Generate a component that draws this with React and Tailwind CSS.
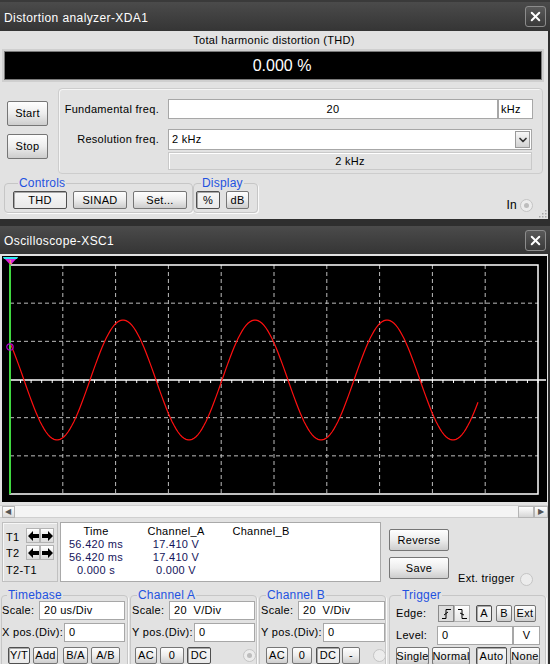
import React from "react";
import { X, ChevronDown } from "lucide-react";

const FONT = { fontFamily: '"Liberation Sans", Arial, sans-serif' };

// ── small building blocks ────────────────────────────────────────────────────
function Btn({ children, pressed, className = "" }) {
  return (
    <div
      className={`flex shrink-0 items-center justify-center whitespace-nowrap rounded-[2px] border leading-none text-black ${
        pressed
          ? "border-[#4f4f4f] bg-linear-to-b from-[#f7f7f7] to-[#e9e9e9] shadow-[inset_1px_1px_0_#a8a8a8]"
          : "border-[#767676] bg-linear-to-b from-[#fefefe] via-[#ededed] to-[#cdcdcd]"
      } ${className}`}
    >
      {children}
    </div>
  );
}

function Field({ children, className = "" }) {
  return (
    <div className={`flex shrink-0 items-center whitespace-nowrap border border-[#a7a7a7] bg-white text-black ${className}`}>
      {children}
    </div>
  );
}

function Group({ label, className = "", children }) {
  return (
    <fieldset className={`min-w-0 shrink-0 rounded-[4px] border border-[#c6c6c6] shadow-[1px_1px_0_#fafafa] ${className}`}>
      <legend className="ml-[5px] px-[1px] text-[12px] leading-[12px] tracking-[0.2px] text-[#1f52e0]">{label}</legend>
      {children}
    </fieldset>
  );
}

function Radio({ dot }) {
  return (
    <div className="flex h-[13px] w-[13px] shrink-0 items-center justify-center rounded-full border border-[#c4c4c4] bg-[#ececec]">
      {dot && <div className="h-[5px] w-[5px] rounded-full bg-[#bdbdbd]" />}
    </div>
  );
}

function Arrow({ dir }) {
  return (
    <svg width="11" height="10" viewBox="0 0 11 10">
      {dir === "left" ? (
        <path d="M0 5 L5 0 V3 H11 V7 H5 V10 Z" fill="#000" />
      ) : (
        <path d="M11 5 L6 0 V3 H0 V7 H6 V10 Z" fill="#000" />
      )}
    </svg>
  );
}

function TitleBar({ title, h }) {
  return (
    <div className={`flex shrink-0 items-center justify-between bg-linear-to-b from-[#4b4b4b] to-[#353535] pl-[4px] pr-[4px] ${h}`}>
      <span className="pt-[2px] text-[12px] tracking-[0.4px] text-white">{title}</span>
      <div className="flex h-[21px] w-[21px] items-center justify-center rounded-[3px] border border-[#8c8c8c] bg-linear-to-b from-[#5a5a5a] to-[#3a3a3a]">
        <X size={15} strokeWidth={3.2} color="#fff" />
      </div>
    </div>
  );
}

// ── oscilloscope drawing ─────────────────────────────────────────────────────
const wavePts = [];
for (let x = 10; x <= 478; x += 2) {
  const y = 380 - 60 * Math.sin((2 * Math.PI * (x + 42)) / 132);
  wavePts.push(`${x - 2},${(y - 256).toFixed(1)}`);
}

function Scope() {
  const L = 8, R = 536, T = 9, B = 238, C = 124;
  const vx = Array.from({ length: 9 }, (_, i) => L + 52.8 * (i + 1));
  const hy = [1, 2, 4, 5].map((j) => T + 38.17 * j);
  const ticks = Array.from({ length: 50 }, (_, i) => L + 10.56 * (i + 1));
  return (
    <svg width="545" height="246" className="block">
      <rect width="545" height="246" fill="#000" />
      {vx.map((x) => (
        <line key={x} x1={x} x2={x} y1={T} y2={B} stroke="#bdbdbd" strokeDasharray="4 3" />
      ))}
      {hy.map((y) => (
        <line key={y} x1={L} x2={R} y1={y} y2={y} stroke="#bdbdbd" strokeDasharray="4 3" />
      ))}
      <line x1={L} x2={R + 8} y1={C} y2={C} stroke="#fff" strokeWidth="1.5" />
      {ticks.map((x) => (
        <line key={x} x1={x} x2={x} y1={C} y2={C + 3} stroke="#fff" />
      ))}
      <rect x={L} y={T} width={R - L} height={B - T} fill="none" stroke="#fff" strokeWidth="1.5" />
      <polyline points={wavePts.join(" ")} fill="none" stroke="#ff1010" strokeWidth="1.2" />
      <line x1={L} x2={L} y1={2} y2={B} stroke="#16e016" strokeWidth="1.5" />
      <polygon points="1,1 16,1 8.5,9" fill="#e020e0" />
      <polygon points="1,1 16,1 15,3 2,3" fill="#30e8f0" />
      <text x="8.5" y="7.5" fontSize="6" fill="#ffd000" textAnchor="middle">1</text>
      <circle cx={L} cy={91} r="3.2" fill="none" stroke="#b000d0" strokeWidth="1.2" />
    </svg>
  );
}

// ── main ─────────────────────────────────────────────────────────────────────
export default function App() {
  return (
    <div
      className="flex h-[664px] w-[550px] flex-col overflow-hidden bg-[#2e2e2e] text-[11px] tracking-[0.3px]"
      style={FONT}
    >
      <div className="h-[2px] shrink-0 bg-[#3a3a3a]" />
      <TitleBar title="Distortion analyzer-XDA1" h="h-[29px]" />

      {/* ── Distortion analyzer body ── */}
      <div className="mr-[2px] flex h-[188px] shrink-0 flex-col bg-[#e2e2e2]">
        <div className="flex h-[18px] items-center justify-center text-black">
          Total harmonic distortion (THD)
        </div>
        <div className="ml-[2px] flex h-[33px] w-[542px] items-center justify-center border-2 border-[#cfcfcf] bg-black pl-[18px] text-[16px] tracking-normal text-white shadow-[inset_0_0_0_1px_#7a7a7a]">
          0.000 %
        </div>

        <div className="mt-[6px] flex">
          <div className="flex w-[58px] flex-col gap-[8px] pl-[7px] pt-[13px]">
            <Btn className="h-[25px] w-[41px]">Start</Btn>
            <Btn className="h-[25px] w-[41px]">Stop</Btn>
          </div>
          <div className="flex h-[86px] w-[485px] flex-col rounded-[4px] border border-[#cdcdcd] shadow-[inset_1px_1px_0_#f5f5f5]">
            <div className="mt-[10px] flex items-center">
              <div className="w-[100px] whitespace-nowrap text-right text-black">Fundamental freq.</div>
              <Field className="ml-[9px] h-[20px] w-[330px] justify-center">20</Field>
              <Field className="h-[20px] w-[35px] pl-[2px]">kHz</Field>
            </div>
            <div className="mt-[10px] flex items-center">
              <div className="w-[100px] whitespace-nowrap text-right text-black">Resolution freq.</div>
              <Field className="ml-[9px] h-[21px] w-[364px] justify-between pl-[3px]">
                <span>2 kHz</span>
                <div className="mr-[1px] flex h-[17px] w-[15px] items-center justify-center border border-[#9a9a9a] bg-linear-to-b from-[#f8f8f8] to-[#d2d2d2]">
                  <ChevronDown size={12} strokeWidth={3.5} color="#333" />
                </div>
              </Field>
            </div>
            <div className="ml-[109px] mt-[2px] flex h-[18px] w-[364px] items-center justify-center border border-[#c9c9c9] bg-[#e2e2e2] text-black shadow-[inset_1px_1px_0_#fff]">
              2 kHz
            </div>
          </div>
        </div>

        <div className="mt-[3px] flex items-end">
          <Group label="Controls" className="ml-[4px] flex h-[36px] w-[189px] gap-[6px] pl-[8px] pt-[2px]">
            <Btn pressed className="h-[18px] w-[54px]">THD</Btn>
            <Btn className="h-[18px] w-[54px]">SINAD</Btn>
            <Btn className="h-[18px] w-[54px]">Set...</Btn>
          </Group>
          <Group label="Display" className="flex h-[36px] w-[65px] gap-[6px] pl-[2px] pt-[2px]">
            <Btn pressed className="h-[18px] w-[24px]">%</Btn>
            <Btn className="h-[18px] w-[23px]">dB</Btn>
          </Group>
          <div className="mb-[-1px] ml-auto flex items-center gap-[3px] text-[12px] text-black">
            In <Radio dot />
          </div>
          <svg width="10" height="10" viewBox="0 0 10 10" className="mb-[-5px] ml-[4px] mr-[1px]">
            {[[8, 2], [8, 5], [5, 5], [8, 8], [5, 8], [2, 8]].map(([cx, cy]) => (
              <rect key={`${cx}-${cy}`} x={cx} y={cy} width="1.5" height="1.5" fill="#a8a8a8" />
            ))}
          </svg>
        </div>
      </div>

      <div className="h-[7px] shrink-0" />
      <TitleBar title="Oscilloscope-XSC1" h="h-[28px]" />

      {/* ── Oscilloscope body ── */}
      <div className="mr-[2px] flex min-h-0 flex-1 flex-col bg-[#e2e2e2]">
        <div className="ml-[2px] mt-[2px] shrink-0">
          <Scope />
        </div>

        {/* scrollbar */}
        <div className="mt-[3px] flex h-[13px] shrink-0 items-center border-y border-[#cfcfcf] bg-[#f4f4f4] pl-[2px]">
          <div className="flex h-[12px] w-[13px] items-center justify-center border border-[#b5b5b5] bg-linear-to-b from-white to-[#dcdcdc] text-[8px] text-[#555]">
            ◀
          </div>
          <div className="flex-1" />
          <div className="h-[12px] w-[16px] border border-[#b5b5b5] bg-linear-to-b from-white to-[#d6d6d6]" />
          <div className="flex h-[12px] w-[14px] items-center justify-center border border-[#b5b5b5] bg-linear-to-b from-white to-[#dcdcdc] text-[8px] text-[#555]">
            ▶
          </div>
        </div>

        {/* cursor readouts */}
        <div className="mt-[4px] flex shrink-0">
          <div className="ml-[2px] flex h-[60px] w-[56px] flex-col border border-[#c0c0c0] pl-[3px] text-black shadow-[inset_1px_1px_0_#f6f6f6]">
            <div className="mt-[5px] flex">
              <div className="flex flex-col justify-center gap-[3px] pt-[2px]">
                <span className="leading-[13px]">T1</span>
                <span className="leading-[13px]">T2</span>
              </div>
              <div className="ml-[7px] grid grid-cols-2 gap-y-[2px]">
                {["left", "right", "left", "right"].map((d, i) => (
                  <div key={i} className="flex h-[15px] w-[14px] items-center justify-center border border-[#b3b3b3] bg-linear-to-b from-white to-[#dadada]">
                    <Arrow dir={d} />
                  </div>
                ))}
              </div>
            </div>
            <div className="mt-[4px] leading-[13px]">T2-T1</div>
          </div>

          <div className="ml-[2px] grid h-[60px] w-[321px] grid-cols-[70px_90px_80px] content-start border border-[#a9a9a9] bg-white pt-[2px] text-center leading-[13px] text-[#14145a]">
            <span className="text-black">Time</span>
            <span className="text-black">Channel_A</span>
            <span className="text-black">Channel_B</span>
            <span>56.420 ms</span>
            <span>17.410 V</span>
            <span />
            <span>56.420 ms</span>
            <span>17.410 V</span>
            <span />
            <span>0.000 s</span>
            <span>0.000 V</span>
            <span />
          </div>

          <div className="ml-[8px] mt-[7px] flex flex-col gap-[6px]">
            <Btn className="h-[22px] w-[60px]">Reverse</Btn>
            <Btn className="h-[22px] w-[60px]">Save</Btn>
          </div>
          <div className="mb-[-4px] ml-[9px] flex items-end gap-[5px] self-end whitespace-nowrap text-black">
            Ext. trigger <Radio />
          </div>
        </div>

        {/* control groups */}
        <div className="mt-[7px] flex shrink-0 whitespace-nowrap text-black">
          <Group label="Timebase" className="ml-[1px] h-[80px] w-[127px]">
            <div className="flex items-center">
              <span className="w-[37px]">Scale:</span>
              <Field className="h-[19px] w-[86px] pl-[4px]">20 us/Div</Field>
            </div>
            <div className="mt-[3px] flex items-center">
              <span className="w-[62px]">X pos.(Div):</span>
              <Field className="h-[19px] w-[61px] pl-[4px]">0</Field>
            </div>
            <div className="mt-[5px] flex gap-[3px] pl-[6px]">
              <Btn pressed className="h-[17px] w-[22px]">Y/T</Btn>
              <Btn className="h-[17px] w-[25px]">Add</Btn>
              <Btn className="ml-[2px] h-[17px] w-[25px]">B/A</Btn>
              <Btn className="h-[17px] w-[29px]">A/B</Btn>
            </div>
          </Group>

          <Group label="Channel A" className="ml-[2px] h-[80px] w-[127px] pl-[1px]">
            <div className="flex items-center">
              <span className="w-[37px]">Scale:</span>
              <Field className="h-[19px] w-[86px] pl-[4px]">20&nbsp;&nbsp;V/Div</Field>
            </div>
            <div className="mt-[3px] flex items-center">
              <span className="w-[62px]">Y pos.(Div):</span>
              <Field className="h-[19px] w-[61px] pl-[4px]">0</Field>
            </div>
            <div className="mt-[5px] flex items-center gap-[3px] pl-[3px]">
              <Btn className="h-[17px] w-[22px]">AC</Btn>
              <Btn className="h-[17px] w-[24px]">0</Btn>
              <Btn pressed className="h-[17px] w-[24px]">DC</Btn>
              <div className="ml-[29px]">
                <Radio dot />
              </div>
            </div>
          </Group>

          <Group label="Channel B" className="ml-[2px] h-[80px] w-[127px] pl-[1px]">
            <div className="flex items-center">
              <span className="w-[37px]">Scale:</span>
              <Field className="h-[19px] w-[87px] pl-[4px]">20&nbsp;&nbsp;V/Div</Field>
            </div>
            <div className="mt-[3px] flex items-center">
              <span className="w-[62px]">Y pos.(Div):</span>
              <Field className="h-[19px] w-[62px] pl-[4px]">0</Field>
            </div>
            <div className="mt-[5px] flex items-center pl-[5px]">
              <Btn className="h-[17px] w-[22px]">AC</Btn>
              <Btn className="ml-[4px] h-[17px] w-[20px]">0</Btn>
              <Btn pressed className="ml-[4px] h-[17px] w-[24px]">DC</Btn>
              <Btn className="ml-[2px] h-[17px] w-[18px]">-</Btn>
              <div className="ml-[13px]">
                <Radio />
              </div>
            </div>
          </Group>

          <Group label="Trigger" className="ml-[3px] h-[80px] w-[157px] pl-[6px]">
            <div className="mt-[4px] flex items-center">
              <span className="w-[42px]">Edge:</span>
              <div className="flex h-[17px] w-[16px] items-center justify-center border border-[#8a8a8a] bg-[#dcdcdc]">
                <svg width="11" height="11" viewBox="0 0 11 11">
                  <path d="M1 10.5 H5 V1.5 H10" fill="none" stroke="#000" />
                  <path d="M3 7 L7 4" fill="none" stroke="#000" />
                </svg>
              </div>
              <div className="flex h-[17px] w-[16px] items-center justify-center border border-[#b0b0b0] bg-linear-to-b from-white to-[#e6e6e6]">
                <svg width="11" height="11" viewBox="0 0 11 11">
                  <path d="M1 1.5 H5 V10.5 H10" fill="none" stroke="#000" />
                  <path d="M3 5 L7 7" fill="none" stroke="#000" />
                </svg>
              </div>
              <Btn pressed className="ml-[6px] h-[17px] w-[16px]">A</Btn>
              <Btn className="ml-[4px] h-[17px] w-[16px]">B</Btn>
              <Btn className="ml-[2px] h-[17px] w-[22px]">Ext</Btn>
            </div>
            <div className="mt-[4px] flex items-center">
              <span className="w-[41px]">Level:</span>
              <Field className="h-[19px] w-[76px] pl-[4px]">0</Field>
              <Field className="h-[19px] w-[27px] justify-center">V</Field>
            </div>
            <div className="mt-[2px] flex gap-[3px]">
              <Btn className="h-[18px] w-[33px]">Single</Btn>
              <Btn className="h-[18px] w-[38px]">Normal</Btn>
              <Btn pressed className="ml-[3px] h-[18px] w-[31px]">Auto</Btn>
              <Btn className="h-[18px] w-[30px]">None</Btn>
            </div>
          </Group>
        </div>
      </div>
    </div>
  );
}
